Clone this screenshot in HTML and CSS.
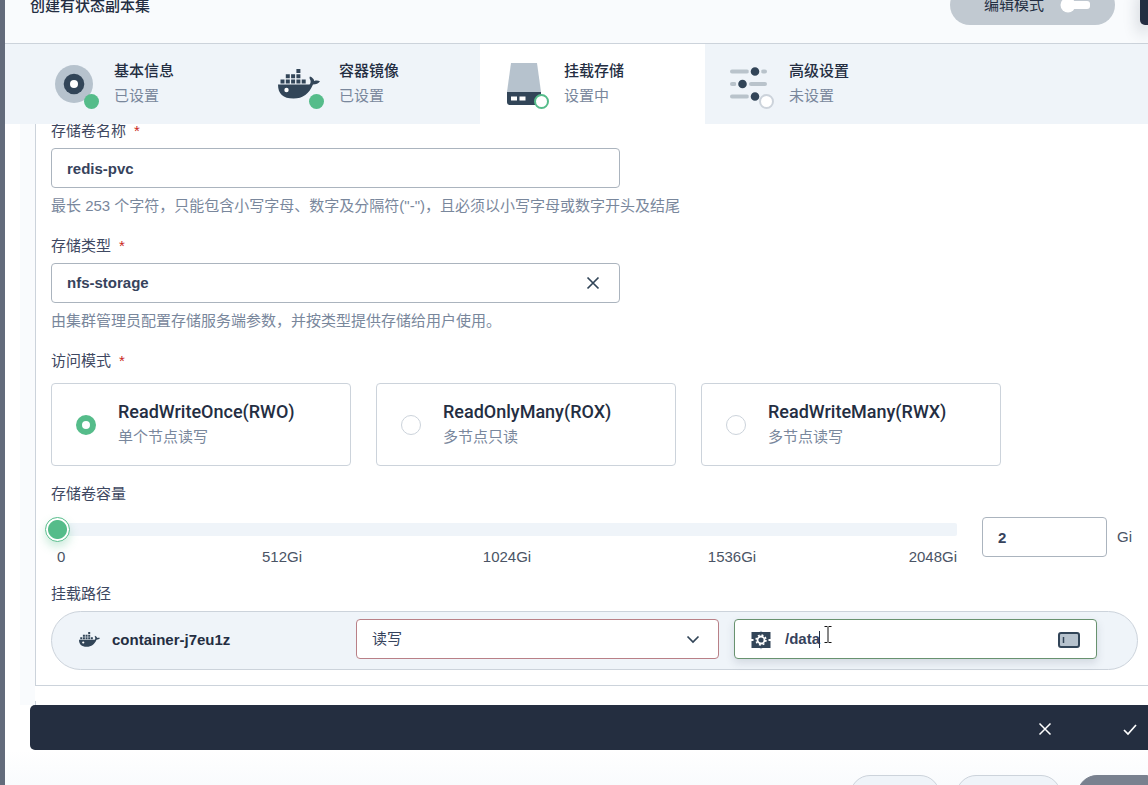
FILE: index.html
```html
<!DOCTYPE html>
<html lang="zh-CN">
<head>
<meta charset="utf-8">
<title>创建有状态副本集</title>
<link rel="stylesheet" href="styles.css">
</head>
<body>
<svg class="defs" aria-hidden="true">
  <symbol id="docker" viewBox="0 0 42 30">
    <path d="M0 15.500h31.500c1-1 1.300-2.500 1-4C31.300 9.500 31.300 8 32 7.500c2.500 1 4 2.500 4.200 4.500 2-.6 4-.5 5.800.2-1.500 2.300-4 3.300-7 3.300C31 25 25 29.500 15.500 29.500 5 29.500 0 25 0 15.500z"/>
    <path d="M2.500 10.500h4v4h-4zM7.800 10.500h4v4h-4zM13.100 10.500h4v4h-4zM18.400 10.500h4v4h-4zM23.700 10.500h4v4h-4zM7.800 5.300h4v4h-4zM13.100 5.300h4v4h-4zM18.400 5.300h4v4h-4zM18.400 0h4v4h-4z"/>
    <circle cx="8.500" cy="21" r="2.200" fill="#fff"/>
  </symbol>
</svg>
<div class="backdrop"></div>
<main class="modal">
  <header class="topbar">
    <h1 class="title">创建有状态副本集</h1>
    <button class="mode" type="button">编辑模式
      <svg width="30" height="16" viewBox="0 0 30 16"><rect x="8" y="4" width="22" height="8" rx="3" fill="#fff"/><circle cx="8" cy="8" r="7.500" fill="#fff"/></svg>
    </button>
    <button class="dark" type="button" aria-label="更多"></button>
  </header>

  <nav class="tabs">
    <button class="tab" type="button">
      <span class="tab-icon">
        <svg width="50" height="50" viewBox="0 0 50 50"><circle cx="24" cy="24" r="19" fill="#b6c2cd"/><circle cx="24" cy="24" r="10.300" fill="#324558"/><circle cx="24" cy="24" r="4" fill="#fff"/></svg>
        <i class="dot done"></i>
      </span>
      <span class="tab-text"><strong>基本信息</strong><span>已设置</span></span>
    </button>
    <button class="tab" type="button">
      <span class="tab-icon">
        <svg width="50" height="50" viewBox="0 0 50 50" fill="#324558"><use href="#docker" x="3" y="9" width="42" height="30"/></svg>
        <i class="dot done"></i>
      </span>
      <span class="tab-text"><strong>容器镜像</strong><span>已设置</span></span>
    </button>
    <button class="tab active" type="button">
      <span class="tab-icon">
        <svg width="50" height="50" viewBox="0 0 50 50"><path d="M11 3h26l4 29H7z" fill="#b6c2cd"/><path d="M7 32h34v13H10q-3 0-3-3z" fill="#324558"/><path d="M11 36.500h6v4h-6zM19.500 36.500h6v4h-6z" fill="#fff"/></svg>
        <i class="dot current"></i>
      </span>
      <span class="tab-text"><strong>挂载存储</strong><span>设置中</span></span>
    </button>
    <button class="tab" type="button">
      <span class="tab-icon">
        <svg width="50" height="50" viewBox="0 0 50 50"><g fill="none" stroke="#b9c3cb" stroke-width="4" stroke-linecap="round"><path d="M7 11.500h15M38 11.500h2M7 24h2.500M26 24h14M7 36.500h15"/></g><g fill="#324558" stroke="#eff4f9" stroke-width="2"><circle cx="30" cy="11.500" r="5.300"/><circle cx="17.500" cy="24" r="5.300"/><circle cx="30" cy="36.500" r="5.300"/></g></svg>
        <i class="dot pending"></i>
      </span>
      <span class="tab-text"><strong>高级设置</strong><span>未设置</span></span>
    </button>
  </nav>

  <form class="body">
    <section class="panel">
      <div class="field">
        <label for="name">存储卷名称<b class="req">*</b></label>
        <input class="control short" id="name" type="text" value="redis-pvc">
        <p class="help">最长 253 个字符，只能包含小写字母、数字及分隔符("-")，且必须以小写字母或数字开头及结尾</p>
      </div>
      <div class="field">
        <label for="type">存储类型<b class="req">*</b></label>
        <div class="box short">
          <select class="control" id="type"><option>nfs-storage</option></select>
          <button class="clear" type="button" aria-label="清除"><svg width="14" height="14" viewBox="0 0 14 14" fill="none" stroke="#324558" stroke-width="1.700"><path d="M1.500 1.500l11 11M12.500 1.500l-11 11"/></svg></button>
        </div>
        <p class="help">由集群管理员配置存储服务端参数，并按类型提供存储给用户使用。</p>
      </div>
      <fieldset class="modes-set">
        <legend>访问模式<b class="req">*</b></legend>
        <div class="modes">
          <label class="option"><input type="radio" name="access" checked><span><strong>ReadWriteOnce(RWO)</strong><small>单个节点读写</small></span></label>
          <label class="option"><input type="radio" name="access"><span><strong>ReadOnlyMany(ROX)</strong><small>多节点只读</small></span></label>
          <label class="option"><input type="radio" name="access"><span><strong>ReadWriteMany(RWX)</strong><small>多节点读写</small></span></label>
        </div>
      </fieldset>
      <div class="capacity">
        <label for="size">存储卷容量</label>
        <div class="capacity-row">
          <div class="slider">
            <input id="size" type="range" min="0" max="2048" value="0">
            <div class="marks"><span>0</span><span>512Gi</span><span>1024Gi</span><span>1536Gi</span><span>2048Gi</span></div>
          </div>
          <input class="control number" type="text" value="2" aria-label="容量">
          <span class="unit">Gi</span>
        </div>
      </div>
      <div class="mount">
        <label for="path">挂载路径</label>
        <div class="capsule">
          <div class="container-name"><svg width="21" height="15" fill="#324558"><use href="#docker"/></svg><strong>container-j7eu1z</strong></div>
          <div class="box warn">
            <select class="control" aria-label="读写权限"><option>读写</option></select>
            <svg class="chevron" width="14" height="14" viewBox="0 0 14 14" fill="none" stroke="#324558" stroke-width="1.700"><path d="M1.500 4.500L7 10l5.500-5.500"/></svg>
          </div>
          <div class="box focus">
            <svg class="gear" width="20" height="20" viewBox="0 0 20 20"><rect x=".5" y="2" width="19" height="16" fill="#324558"/><path d="M10 .5L11.500 2h-3zM10 19.500l1.500-1.500h-3z" fill="#b6c2cd"/><path d="M0 9h2.500v2H0zM17.500 9H20v2h-2.500z" fill="#fff"/><circle cx="10" cy="10" r="4.900" fill="none" stroke="#fff" stroke-width="1.600" stroke-dasharray="1.924 1.924"/><circle cx="10" cy="10" r="3.500" fill="none" stroke="#fff" stroke-width="1.800"/></svg>
            <input class="control" id="path" type="text" value="/data">
            <svg class="key" width="22" height="16" viewBox="0 0 22 16"><rect x="1" y="1" width="20" height="14" rx="2" fill="#b6c2cd" stroke="#324558" stroke-width="2"/><path d="M5.500 5v6" stroke="#324558" stroke-width="1.500"/></svg>
            <i class="caret"></i>
            <svg class="pointer" width="8" height="17" viewBox="0 0 8 17" fill="none" stroke="#111"><path d="M.5.500h3M4.500.500h3M.5 16.500h3M4.500 16.500h3M4 1v15"/></svg>
          </div>
        </div>
      </div>
    </section>
    <section class="panel next"></section>
  </form>

  <div class="confirm">
    <button type="button" aria-label="取消"><svg width="14" height="14" viewBox="0 0 14 14" fill="none" stroke="#fff" stroke-width="1.500"><path d="M1.500 1.500l11 11M12.500 1.500l-11 11"/></svg></button>
    <button type="button" aria-label="确定"><svg width="14" height="14" viewBox="0 0 14 14" fill="none" stroke="#fff" stroke-width="1.700"><path d="M1 8l4 4 8-9"/></svg></button>
  </div>
  <footer class="footer">
    <button class="pill" type="button" aria-label="取消"></button>
    <button class="pill wide" type="button" aria-label="上一步"></button>
    <button class="pill next-step" type="button" aria-label="下一步"></button>
  </footer>
</main>
</body>
</html>
```
FILE: styles.css
```css
* { box-sizing: border-box; }
body {
  margin: 0;
  height: 100vh;
  display: flex;
  overflow: hidden;
  background: #fff;
  color: #242e42;
  font: 15px/20px "Liberation Sans", "Noto Sans CJK SC", sans-serif;
}
button, input, select { font: inherit; color: inherit; }
button { border: 0; padding: 0; background: none; }
label, legend { display: block; padding: 0; color: #3e4861; }
svg { display: block; flex: none; }
.defs { position: absolute; width: 0; height: 0; }
.backdrop { flex: 0 0 5px; background: #636b7b; }
.modal { flex: 1; min-width: 0; display: flex; flex-direction: column; }

.topbar {
  flex: none;
  display: flex;
  align-items: center;
  margin-top: -15px;
  padding: 0 0 18px 25px;
  background: #f9fbfd;
  border-bottom: 1px solid #ccd3db;
}
.title { flex: 1; margin: 0; font-size: 15px; font-family: "Noto Sans CJK SC", sans-serif; font-weight: 500; line-height: 20px; }
.mode {
  display: flex;
  align-items: center;
  justify-content: flex-end;
  gap: 16px;
  width: 165px;
  height: 40px;
  padding-right: 25px;
  border-radius: 20px;
  background: #c1c9d1;
}
.dark { width: 8px; height: 40px; margin-left: 25px; border-radius: 5px 0 0 5px; background: #242e42; box-shadow: 0 8px 16px rgba(36, 46, 66, .28); }

.tabs { flex: none; display: flex; height: 80px; padding-left: 25px; background: #eff4f9; }
.tab { flex: 0 0 225px; display: flex; align-items: flex-start; gap: 14px; padding: 16px 0 0 20px; text-align: left; }
.tab.active { background: #fff; }
.tab-icon { position: relative; }
.tab-text { display: flex; flex-direction: column; gap: 6px; color: #79879c; }
.tab-text strong { font-family: "Noto Sans CJK SC", sans-serif; font-weight: 500; color: #242e42; }
.dot { position: absolute; right: 1px; bottom: 1px; width: 15px; height: 15px; border-radius: 50%; }
.done { background: #55bc8a; }
.current { border: 2px solid #55bc8a; background: #fff; }
.pending { border: 2px solid #ccd3db; background: #fff; }

.body { flex: 1; min-height: 0; overflow: hidden; margin: 0 0 0 15px; padding-left: 15px; background: linear-gradient(90deg, #f9fbfd 15px, #fff 15px); }
.panel { padding: 0 10px 15px 15px; border: solid #ccd3db; border-width: 0 0 1px 1px; background: #fff; }
.panel.next { height: 40px; margin-top: 15px; }
.field { padding-bottom: 20px; }
.field label { margin: -3px 0 7px; }
.field + .field label { margin-top: 0; }
.req { margin-left: 8px; font-weight: 400; color: #ca2621; }
.control {
  display: block;
  width: 100%;
  height: 40px;
  padding: 0 15px;
  border: 1px solid #abb4be;
  border-radius: 4px;
  outline: 0;
  background: #fff;
  color: #36435c;
  font-weight: 700;
  appearance: none;
}
.short { width: 569px; max-width: 100%; }
.help { margin: 8px 0 0; color: #79879c; }
.box { position: relative; }
.clear, .chevron { position: absolute; right: 20px; top: 13px; }
.chevron { right: 19px; }

.modes-set { margin: 0; padding: 0; border: 0; }
.modes { display: flex; gap: 25px; margin-top: 12px; }
.option { flex: 0 0 300px; display: flex; align-items: center; gap: 22px; height: 83px; padding: 0 24px; border: 1px solid #ccd3db; border-radius: 4px; }
.option input { flex: none; appearance: none; width: 20px; height: 20px; margin: 0; border: 1px solid #ccd3db; border-radius: 50%; background: #fff; }
.option input:checked { border: 6px solid #55bc8a; }
.option span { display: flex; flex-direction: column; gap: 5px; }
.option strong { font-family: Roboto, sans-serif; font-size: 18px; font-weight: 500; color: #242e42; }
.option small { font-size: 15px; color: #79879c; }

.capacity { margin-top: 18px; }
.capacity-row { display: flex; align-items: flex-start; margin-top: 13px; }
.slider { flex: 1; margin-left: -6px; padding-top: 6px; }
.slider input { display: block; appearance: none; width: 100%; height: 13px; margin: 0; border-radius: 2px; background: linear-gradient(90deg, transparent 8px, #eff4f9 8px); }
.slider input::-webkit-slider-thumb { appearance: none; width: 25px; height: 25px; border: 1px solid #55bc8a; border-radius: 50%; background: radial-gradient(circle, #55bc8a 9px, #fff 10px); box-shadow: 0 5px 10px rgba(85, 188, 138, .3); }
.marks { display: grid; grid-template-columns: 1fr 2fr 2fr 2fr 1fr; margin-top: 11px; padding-left: 12px; text-align: center; color: #4a5465; }
.marks span:first-child { text-align: left; }
.marks span:last-child { text-align: right; }
.number { flex: none; width: 125px; margin-left: 25px; }
.unit { width: 21px; margin-left: 10px; line-height: 40px; color: #4a5465; }

.mount { margin-top: 17px; }
.capsule { display: flex; align-items: center; gap: 15px; height: 59px; margin-top: 7px; padding: 0 40px 4px 27px; border: 1px solid #ccd3db; border-radius: 30px; background: #eff4f9; }
.container-name { flex: 0 0 262px; display: flex; align-items: center; gap: 12px; padding-top: 2px; }
.capsule .box { flex: 1; }
.warn .control { border-color: #b98087; font-weight: 400; }
.focus .control { padding-left: 50px; border-color: #68926f; box-shadow: 0 4px 8px rgba(54, 67, 92, .15); }
.gear { position: absolute; left: 17px; top: 11px; }
.key { position: absolute; right: 17px; top: 13px; }
.caret { position: absolute; left: 85px; top: 12px; width: 1px; height: 17px; background: #242e42; }
.pointer { position: absolute; left: 90px; top: 7px; }

.confirm { flex: none; display: flex; align-items: center; justify-content: flex-end; gap: 71px; height: 45px; margin-left: 25px; padding: 2px 11px 0 0; border-radius: 5px 0 0 5px; background: #242e40; }
.footer { flex: none; display: flex; justify-content: flex-end; gap: 16px; height: 35px; padding-top: 25px; background: linear-gradient(#fff, #f9fbfd); overflow: hidden; }
.pill { flex: none; width: 90px; height: 40px; border: 1px solid #ccd3db; border-radius: 20px; background: #eff4f9; }
.wide { width: 105px; }
.next-step { width: 71px; border-color: #79818f; border-radius: 20px 0 0 20px; background: #79818f; }
```
